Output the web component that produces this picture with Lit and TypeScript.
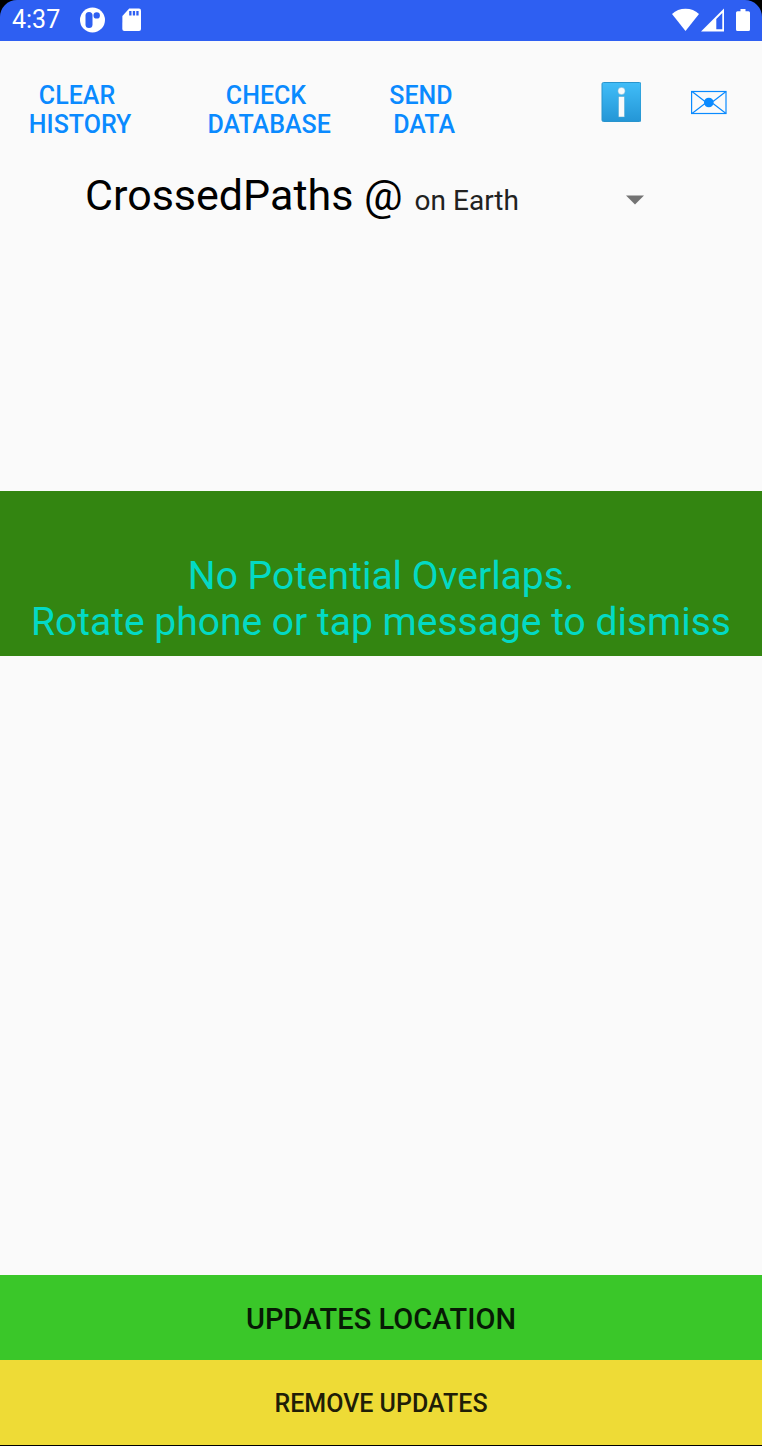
import { LitElement, html, css, nothing } from "lit";
import { customElement, state } from "lit/decorators.js";

@customElement("status-bar")
class StatusBar extends LitElement {
  static styles = css`
    :host {
      display: block;
      background: #000;
    }
    .bar {
      display: flex;
      align-items: center;
      justify-content: space-between;
      height: 41px;
      padding: 0 12px 2px;
      box-sizing: border-box;
      background: #2e5ff2;
      border-radius: 17px 17px 0 0;
      color: #fff;
      font-size: 25px;
      line-height: 39px;
    }
    .group {
      display: flex;
      align-items: center;
    }
    .left {
      gap: 17px;
    }
    .time {
      margin-right: 3px;
    }
    svg {
      display: block;
    }
    .right {
      gap: 2px;
    }
    .battery {
      margin-left: 10px;
    }
  `;

  render() {
    return html`
      <div class="bar">
        <div class="group left">
          <span class="time">4:37</span>
          <svg width="25" height="26" viewBox="0 0 25 26" aria-hidden="true">
            <circle cx="12.5" cy="13" r="12.5" fill="#fff" />
            <rect x="5.5" y="5" width="7" height="16" rx="3.5" fill="#2e5ff2" />
            <circle cx="16.7" cy="8.4" r="3.2" fill="#2e5ff2" />
          </svg>
          <svg width="19" height="24" viewBox="0 0 19 24" aria-hidden="true">
            <path
              d="M7.2 .5H17Q19 .5 19 2.5V21Q19 23 17 23H2.3Q.3 23 .3 21L.4 8Z"
              fill="#fff"
            />
            <path
              d="M7.2 3h2.3v4.6H7.2zM10.8 3h2.3v4.6h-2.3zM14.3 3h2.3v4.6h-2.3z"
              fill="#2e5ff2"
            />
          </svg>
        </div>
        <div class="group right">
          <svg width="27" height="24" viewBox="0 0 27 24" aria-hidden="true">
            <path d="M0 6Q5.5 .8 13.5 .8T27 6L13.5 23Z" fill="#fff" />
          </svg>
          <svg width="23" height="24" viewBox="0 0 23 24" aria-hidden="true">
            <path
              fill-rule="evenodd"
              d="M0 23.500L23 .5V23.500ZM15.300 11V21.300H21.300V5Z"
              fill="#fff"
            />
          </svg>
          <svg
            class="battery"
            width="14"
            height="24"
            viewBox="0 0 14 24"
            aria-hidden="true"
          >
            <path
              d="M4.500 1H9.500V3.200H12.500Q14 3.200 14 4.700V21.500Q14 23 12.500 23H1.500Q0 23 0 21.500V4.700Q0 3.200 1.500 3.200H4.500Z"
              fill="#fff"
            />
          </svg>
        </div>
      </div>
    `;
  }
}

@customElement("app-root")
class AppRoot extends LitElement {
  @state() private messageVisible = true;

  static styles = css`
    :host {
      display: flex;
      flex-direction: column;
      min-height: 100vh;
      box-sizing: border-box;
      border-bottom: 1px solid #000;
      background: #fafafa;
      font-family: Roboto, "Noto Sans", sans-serif;
    }
    button,
    select {
      margin: 0;
      padding: 0;
      border: 0;
      background: none;
      font-family: inherit;
      cursor: pointer;
    }
    .toolbar {
      display: grid;
      grid-template-columns: 154fr 224fr 86fr 113fr 88fr 88fr 9fr;
      align-items: center;
      padding-top: 40px;
    }
    .action {
      color: #0a8aff;
      font-size: 25px;
      font-weight: 500;
      line-height: 29px;
      text-align: center;
      white-space: pre;
    }
    .icon {
      display: flex;
      justify-content: center;
      padding-bottom: 16px;
    }
    .info {
      grid-column: 5;
    }
    .heading {
      display: flex;
      align-items: center;
      gap: 12px;
      padding: 31px 85px 0;
    }
    h1 {
      margin: 0;
      color: #000;
      font-size: 43px;
      font-weight: 400;
      line-height: 50px;
      white-space: nowrap;
    }
    .spinner {
      display: grid;
      grid-template-columns: 1fr 18px;
      align-items: center;
      width: 229px;
      padding-top: 12px;
    }
    .spinner select {
      grid-area: 1 / 1 / 2 / 3;
      appearance: none;
      color: #212121;
      font-size: 28px;
      line-height: 34px;
    }
    .spinner svg {
      grid-area: 1 / 2;
      pointer-events: none;
    }
    main {
      display: grid;
      grid-template-rows: 271fr auto 618fr;
      flex: 1;
    }
    .message {
      grid-row: 2;
      padding: 62px 8px 11px;
      background: #338511;
      color: #03dac5;
      font-size: 39px;
      line-height: 46px;
      text-align: center;
    }
    .footer {
      display: grid;
      grid-auto-rows: 85px;
    }
    .start {
      background: #3ac729;
      color: #071a05;
      font-size: 29px;
      font-weight: 500;
      padding-top: 2px;
    }
    .stop {
      background: #eedb36;
      color: #201d07;
      font-size: 25px;
      font-weight: 500;
      padding-top: 2px;
    }
  `;

  private dismiss() {
    this.messageVisible = false;
  }

  render() {
    return html`
      <status-bar></status-bar>
      <nav class="toolbar">
        <button class="action">${"CLEAR\n HISTORY"}</button>
        <button class="action">${"CHECK\n DATABASE"}</button>
        <button class="action">${"SEND\n DATA"}</button>
        <button class="icon info" aria-label="Information">
          <svg width="40" height="40" viewBox="0 0 40 40">
            <defs>
              <linearGradient id="sky" x1="0" y1="0" x2="0" y2="1">
                <stop offset="0" stop-color="#41bdf8" />
                <stop offset="1" stop-color="#2496d6" />
              </linearGradient>
            </defs>
            <rect
              x="1"
              y=".5"
              width="39"
              height="39"
              rx="1.5"
              fill="url(#sky)"
              stroke="#2894cd"
            />
            <circle cx="20.500" cy="9" r="3.700" fill="#fafafa" stroke="#4aa5d3" stroke-width=".5" />
            <rect
              x="17.500"
              y="14.500"
              width="6"
              height="20.500"
              fill="#fafafa"
              stroke="#4aa5d3"
              stroke-width=".5"
            />
          </svg>
        </button>
        <button class="icon" aria-label="Mail">
          <svg width="36" height="40" viewBox="0 0 36 40">
            <g fill="none" stroke="#0a8aff" stroke-width="1.200">
              <rect x=".6" y="9.500" width="34.400" height="22" />
              <path d="M1 9.500L14 19.500M35 9.500L22 19.500M1 31.500L14 21.500M35 31.500L22 21.500" />
            </g>
            <circle cx="17.800" cy="20.500" r="4.800" fill="#0a8aff" />
          </svg>
        </button>
      </nav>
      <header class="heading">
        <h1><label for="place">CrossedPaths @</label></h1>
        <div class="spinner">
          <select id="place">
            <option>on Earth</option>
          </select>
          <svg width="18" height="12" viewBox="0 0 18 12" aria-hidden="true">
            <path d="M0 .5H18L9 9.500Z" fill="#737373" />
          </svg>
        </div>
      </header>
      <main>
        ${this.messageVisible
          ? html`<button class="message" @click=${this.dismiss}>
              No Potential Overlaps.<br />Rotate phone or tap message to dismiss
            </button>`
          : nothing}
      </main>
      <footer class="footer">
        <button class="start">UPDATES LOCATION</button>
        <button class="stop">REMOVE UPDATES</button>
      </footer>
    `;
  }
}
